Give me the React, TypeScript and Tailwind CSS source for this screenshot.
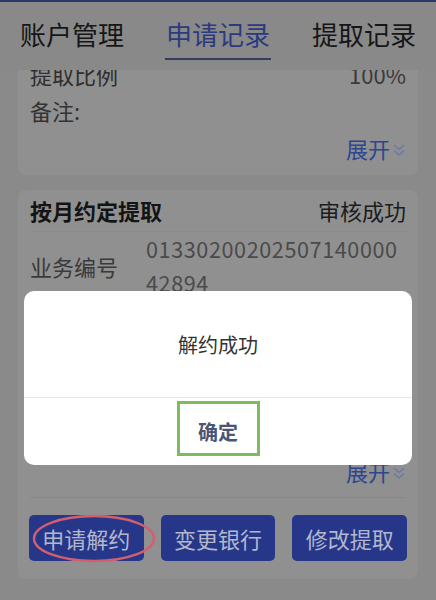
import React from "react";

function Chevrons() {
  return (
    <svg width="14" height="14" viewBox="0 0 14 14" className="ml-[2px] mt-[4px]">
      <polyline points="2,2 7,6.5 12,2" fill="none" stroke="#6d7aa6" strokeWidth="1.6" />
      <polyline points="2,7.5 7,12 12,7.5" fill="none" stroke="#6d7aa6" strokeWidth="1.6" />
    </svg>
  );
}

function Expand() {
  return (
    <div className="flex justify-end items-center h-[36px] text-[22px] text-[#2e4590]">
      <span>展开</span>
      <Chevrons />
    </div>
  );
}

export default function App() {
  return (
    <div className="relative w-[436px] h-[600px] overflow-hidden bg-[#8a8a8a] font-['Noto_Sans_CJK_SC','Noto_Sans',sans-serif]">
      <div className="h-[2px] bg-[#2b3766]" />
      <div className="h-[68px] bg-[#898989] flex justify-between px-[20px] pt-[14px]">
        <div className="text-[26px] leading-[36px] text-[#161616]">账户管理</div>
        <div className="flex flex-col items-center">
          <div className="text-[26px] leading-[36px] text-[#2c3a80]">申请记录</div>
          <div className="mt-[6px] w-[106px] h-[2px] bg-[#353d5e]" />
        </div>
        <div className="text-[26px] leading-[36px] text-[#161616]">提取记录</div>
      </div>

      <div className="h-[530px] overflow-hidden flex flex-col px-[18px]">
        <div className="-mt-[14px] bg-[#909090] rounded-[8px] px-[12px] pb-[9px]">
          <div className="flex justify-between items-center h-[36px] text-[22px] text-[#2e2e2e]">
            <span>提取比例</span>
            <span className="text-[#3a3a3a]">100%</span>
          </div>
          <div className="flex items-center h-[36px] text-[22px] text-[#333333]">备注:</div>
          <div className="mt-[2px]">
            <Expand />
          </div>
        </div>

        <div className="mt-[15px] bg-[#909090] rounded-[8px] px-[12px] pb-[18px]">
          <div className="flex justify-between items-center h-[42px] text-[22px] border-b border-[#8a8a8a]">
            <span className="font-bold text-[#141414]">按月约定提取</span>
            <span className="text-[#1c1c1c]">审核成功</span>
          </div>
          <div className="flex items-center">
            <div className="w-[116px] text-[22px] text-[#3a3a3a]">业务编号</div>
            <div className="w-[254px] text-[21.6px] leading-[34px] tracking-[0.6px] text-[#4a4a4a] break-all">0133020020250714000042894</div>
          </div>
          <div className="flex flex-col">
            <div className="flex items-center h-[38px] text-[22px] text-[#3a3a3a]">提取金额</div>
            <div className="flex items-center h-[38px] text-[22px] text-[#3a3a3a]">提取周期</div>
            <div className="flex items-center h-[38px] text-[22px] text-[#3a3a3a]">收款银行</div>
            <div className="flex items-center h-[38px] text-[22px] text-[#3a3a3a]">申请日期</div>
          </div>
          <div className="mt-[1px]">
            <Expand />
          </div>
          <div className="mt-[8px] border-t border-[#888888]" />
          <div className="relative grid grid-cols-3 gap-[17px] pt-[17px] -mx-[1px]">
            <div className="h-[46px] rounded-[5px] bg-[#26378a] flex items-center justify-center text-[22px] text-[#b3b7cc]">申请解约</div>
            <div className="h-[46px] rounded-[5px] bg-[#26378a] flex items-center justify-center text-[22px] text-[#b3b7cc]">变更银行</div>
            <div className="h-[46px] rounded-[5px] bg-[#26378a] flex items-center justify-center text-[22px] text-[#b3b7cc]">修改提取</div>
          </div>
        </div>
      </div>

      <svg className="absolute left-[32px] top-[514px]" width="126" height="50" viewBox="0 0 126 50">
        <ellipse cx="62" cy="24.5" rx="60" ry="22.5" fill="none" stroke="#d35f6e" strokeWidth="2.5" />
      </svg>

      <div className="absolute left-[24px] top-[291px] w-[388px] h-[174px] bg-white rounded-[10px] flex flex-col">
        <div className="h-[106px] flex items-center justify-center pt-[2px] text-[20px] text-[#333333]">解约成功</div>
        <div className="h-px bg-[#e6e6e6]" />
        <div className="flex-1 flex justify-center pt-[3px]">
          <div className="w-[83px] h-[55px] border-[3px] border-[#7dbb5c] flex items-center justify-center pt-[6px] text-[20px] font-bold text-[#4b5575]">
            确定
          </div>
        </div>
      </div>
    </div>
  );
}
